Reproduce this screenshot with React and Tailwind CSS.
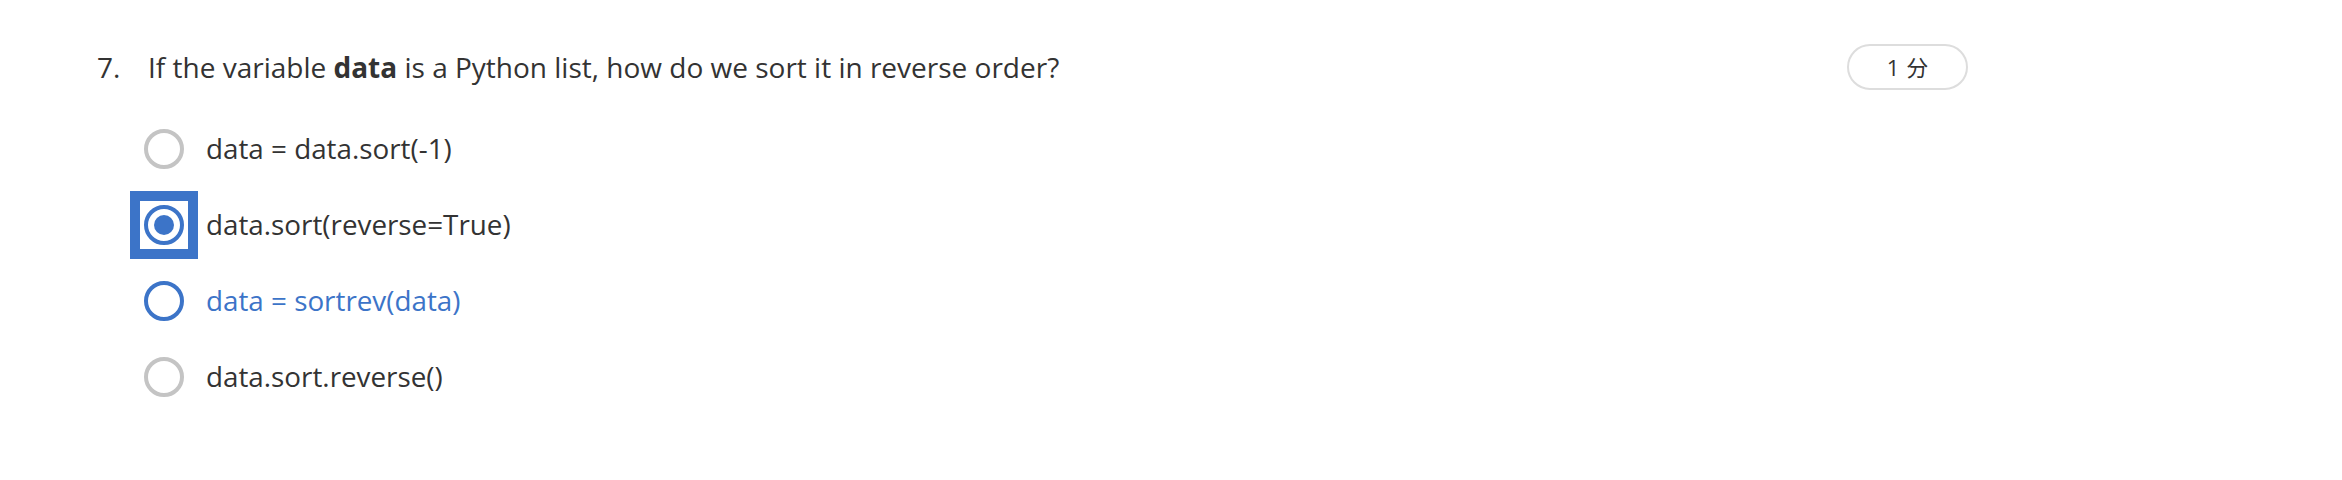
import React from 'react'

const options = [
  { label: 'data = data.sort(-1)', state: 'idle' },
  { label: 'data.sort(reverse=True)', state: 'focused' },
  { label: 'data = sortrev(data)', state: 'hover' },
  { label: 'data.sort.reverse()', state: 'idle' },
]

const Radio = ({ state }) => {
  if (state === 'focused') {
    return (
      <span className="w-10 h-10 shrink-0 outline-[10px] outline-solid outline-[#3c74c8] outline-offset-4">
        <span className="w-10 h-10 rounded-full border-4 border-[#3c74c8] flex items-center justify-center">
          <span className="w-5 h-5 rounded-full bg-[#3c74c8]" />
        </span>
      </span>
    )
  }
  const color = state === 'hover' ? 'border-[#3c74c8]' : 'border-[#c4c4c4]'
  return <span className={`w-10 h-10 shrink-0 rounded-full border-4 ${color}`} />
}

export default function App() {
  return (
    <div className="w-full h-[480px] bg-white font-['Open_Sans',sans-serif] text-[#333333]">
      <div className="w-[1968px] pl-[97px] pt-[44px]">
        {/* Question */}
        <div className="flex items-center h-[46px]">
          <span className="w-[51px] shrink-0 text-[28px]">7.</span>
          <p className="flex-1 text-[28px]">
            If the variable <b className="font-bold">data</b> is a Python list, how do we sort it in reverse order?
          </p>
          <span className="w-[121px] h-[46px] shrink-0 rounded-full border-2 border-[#dddddd] flex items-center justify-center gap-[7px] text-[22px] font-['Open_Sans','Noto_Sans_CJK_SC',sans-serif]">
            <span>1</span>
            <span>分</span>
          </span>
        </div>

        {/* Options */}
        <div className="pl-[47px] pt-[21px]">
          {options.map((o) => (
            <div key={o.label} className="flex items-center h-[76px] gap-[22px]">
              <Radio state={o.state} />
              <span className={`text-[27.8px] ${o.state === 'hover' ? 'text-[#3c74c8]' : ''}`}>{o.label}</span>
            </div>
          ))}
        </div>
      </div>
    </div>
  )
}
